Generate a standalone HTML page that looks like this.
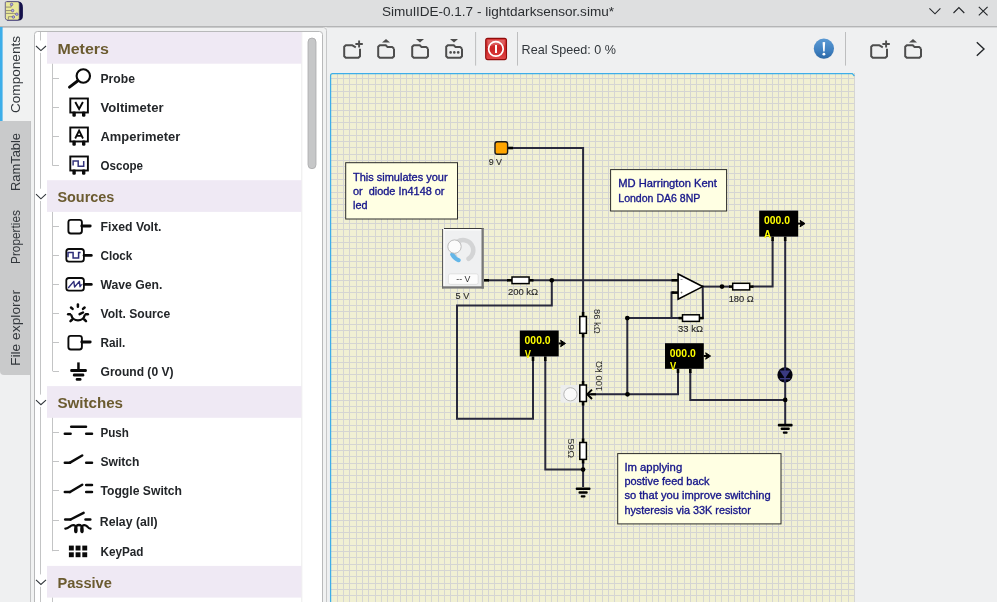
<!DOCTYPE html>
<html><head><meta charset="utf-8"><title>SimulIDE</title>
<style>html,body{margin:0;padding:0;width:997px;height:602px;overflow:hidden;background:#eff0f1}
svg{display:block;font-family:"Liberation Sans", sans-serif;will-change:transform}</style></head>
<body><svg width="997" height="602" viewBox="0 0 997 602">
<rect x="0" y="0" width="997" height="602" fill="#eff0f1"/>
<rect x="0" y="0" width="997" height="26" fill="#dedfe0"/>
<rect x="0" y="26" width="997" height="1.4" fill="#b4b5b6"/>
<text x="382" y="15.5" font-size="13" fill="#2b2e31" textLength="232" lengthAdjust="spacingAndGlyphs" text-anchor="start" >SimulIDE-0.1.7 - lightdarksensor.simu*</text>
<g fill="none" stroke="#232629" stroke-width="1.1"><polyline points="929.4,8.4 935,13.8 940.4,8.4"/><polyline points="953.5,13 958.9,7.6 964.3,13"/><path d="M978.8,6.8 L987.6,15.4 M987.6,6.8 L978.8,15.4"/></g>
<g><path d="M7,1.6 H18.5 Q22.9,2.2 22.9,7.5 V16 Q22.9,20.4 18.5,20.6 H7 Z" fill="#14104a"/><path d="M6.2,1.7 H17.5 Q19.3,1.7 19.3,3.6 V18.3 Q19.3,20.1 17.5,20.1 H7.6 Q5.3,20.1 5.3,17.8 V2.6 Q5.3,1.7 6.2,1.7 Z" fill="#e9e89a" stroke="#3b3278" stroke-width="0.7"/><g stroke="#8a8470" stroke-width="0.9" fill="none"><path d="M5.6,7.1 H11.2 V4.6"/><path d="M5.6,10.6 H12.3"/><path d="M5.6,13.4 H13.5 L16.6,14.2"/><path d="M8.4,19.6 V16.7 H13.2"/></g><g fill="#b7b0e6" stroke="#4a4290" stroke-width="0.6"><circle cx="11.6" cy="4.4" r="1.25"/><circle cx="12.6" cy="10.6" r="1.25"/><circle cx="16.8" cy="14.2" r="1.25"/><circle cx="13.4" cy="17" r="1.25"/></g></g>
<rect x="0" y="27" width="326.5" height="575" fill="#f1f2f2"/>
<path d="M0,27.5 H323.5 Q326.5,27.5 326.5,30.5 V602" fill="none" stroke="#c6c7c8" stroke-width="1"/>
<rect x="0" y="370" width="30" height="232" fill="#eff0f1"/>
<path d="M0,121 H31 V375 H4 Q0,375 0,371 Z" fill="#c9cacb"/>
<rect x="30" y="121" width="1" height="481" fill="#c2c3c4"/>
<rect x="0" y="27" width="2.6" height="94" fill="#3daee9"/>
<text transform="translate(20.2,113) rotate(-90)" x="0" y="0" font-size="13" fill="#31363b" textLength="77" lengthAdjust="spacingAndGlyphs">Components</text>
<text transform="translate(20.2,191) rotate(-90)" x="0" y="0" font-size="13" fill="#31363b" textLength="58" lengthAdjust="spacingAndGlyphs">RamTable</text>
<text transform="translate(20.2,264) rotate(-90)" x="0" y="0" font-size="13" fill="#31363b" textLength="54" lengthAdjust="spacingAndGlyphs">Properties</text>
<text transform="translate(20.2,366) rotate(-90)" x="0" y="0" font-size="13" fill="#31363b" textLength="76" lengthAdjust="spacingAndGlyphs">File explorer</text>
<rect x="34.5" y="31.5" width="288" height="600" rx="3" fill="#ffffff" stroke="#b8b9ba" stroke-width="1"/>
<rect x="301.3" y="32" width="1" height="570" fill="#ebebeb"/>
<rect x="308" y="38" width="8" height="130.7" rx="4" fill="#c6c7c8" stroke="#a9aaab" stroke-width="0.8"/>
<rect x="40" y="32" width="1" height="570" fill="#c3c4c5"/>
<rect x="47" y="32" width="254.5" height="31.7" fill="#efe9f4"/>
<rect x="38" y="40.5" width="6" height="12.3" fill="#ffffff"/>
<polyline points="36,46.0 40.9,50.599999999999994 46,46.0" fill="none" stroke="#31363b" stroke-width="1.1"/>
<text x="57.4" y="54" font-size="14" font-weight="bold" fill="#6b5b30" textLength="51.5" lengthAdjust="spacingAndGlyphs" text-anchor="start" >Meters</text>
<rect x="47" y="180.2" width="254.5" height="31.7" fill="#efe9f4"/>
<rect x="38" y="188.7" width="6" height="12.3" fill="#ffffff"/>
<polyline points="36,194.2 40.9,198.8 46,194.2" fill="none" stroke="#31363b" stroke-width="1.1"/>
<text x="57.4" y="202.2" font-size="14" font-weight="bold" fill="#6b5b30" textLength="57" lengthAdjust="spacingAndGlyphs" text-anchor="start" >Sources</text>
<rect x="47" y="386.1" width="254.5" height="31.7" fill="#efe9f4"/>
<rect x="38" y="394.6" width="6" height="12.3" fill="#ffffff"/>
<polyline points="36,400.1 40.9,404.70000000000005 46,400.1" fill="none" stroke="#31363b" stroke-width="1.1"/>
<text x="57.4" y="408.1" font-size="14" font-weight="bold" fill="#6b5b30" textLength="65.6" lengthAdjust="spacingAndGlyphs" text-anchor="start" >Switches</text>
<rect x="47" y="565.9" width="254.5" height="31.7" fill="#efe9f4"/>
<rect x="38" y="574.4" width="6" height="12.3" fill="#ffffff"/>
<polyline points="36,579.9 40.9,584.4999999999999 46,579.9" fill="none" stroke="#31363b" stroke-width="1.1"/>
<text x="57.4" y="587.9" font-size="14" font-weight="bold" fill="#6b5b30" textLength="54.5" lengthAdjust="spacingAndGlyphs" text-anchor="start" >Passive</text>
<rect x="53" y="78" width="6" height="1" fill="#c3c4c5"/>
<text x="100.5" y="82.8" font-size="13" font-weight="bold" fill="#232629" textLength="34.4" lengthAdjust="spacingAndGlyphs" text-anchor="start" >Probe</text>
<line x1="78.2" y1="80.5" x2="69.5" y2="87.10000000000001" stroke="#0a0a0a" stroke-width="2.9" stroke-linecap="round"/><circle cx="83.3" cy="76.0" r="6.7" fill="#fff" stroke="#0a0a0a" stroke-width="2.1"/>
<rect x="53" y="107" width="6" height="1" fill="#c3c4c5"/>
<text x="100.5" y="111.8" font-size="13" font-weight="bold" fill="#232629" textLength="63" lengthAdjust="spacingAndGlyphs" text-anchor="start" >Voltimeter</text>
<rect x="70.3" y="98.5" width="17.6" height="14" fill="#fff" stroke="#0a0a0a" stroke-width="1.9"/><rect x="72.4" y="111.5" width="3.4" height="5.2" rx="1.3" fill="#0a0a0a"/><rect x="82" y="111.5" width="3.4" height="5.2" rx="1.3" fill="#0a0a0a"/><path d="M75.3,102.0 L79.1,109.0 L82.9,102.0" fill="none" stroke="#0a0a0a" stroke-width="1.9"/>
<rect x="53" y="136" width="6" height="1" fill="#c3c4c5"/>
<text x="100.5" y="140.79999999999998" font-size="13" font-weight="bold" fill="#232629" textLength="79.8" lengthAdjust="spacingAndGlyphs" text-anchor="start" >Amperimeter</text>
<rect x="70.3" y="127.49999999999999" width="17.6" height="14" fill="#fff" stroke="#0a0a0a" stroke-width="1.9"/><rect x="72.4" y="140.5" width="3.4" height="5.2" rx="1.3" fill="#0a0a0a"/><rect x="82" y="140.5" width="3.4" height="5.2" rx="1.3" fill="#0a0a0a"/><path d="M75.2,138.5 L79.1,130.5 L83,138.5 M76.6,135.79999999999998 H81.6" fill="none" stroke="#0a0a0a" stroke-width="1.8"/>
<rect x="53" y="165" width="6" height="1" fill="#c3c4c5"/>
<text x="100.5" y="169.79999999999998" font-size="13" font-weight="bold" fill="#232629" textLength="42.5" lengthAdjust="spacingAndGlyphs" text-anchor="start" >Oscope</text>
<rect x="70.3" y="156.5" width="17.6" height="14" fill="#fff" stroke="#0a0a0a" stroke-width="1.9"/><rect x="72.4" y="169.5" width="3.4" height="5.2" rx="1.3" fill="#0a0a0a"/><rect x="82" y="169.5" width="3.4" height="5.2" rx="1.3" fill="#0a0a0a"/><polyline points="73.1,165.5 73.1,161.0 78.2,161.0 78.2,166.3 83.7,166.3 83.7,161.0" fill="none" stroke="#34347c" stroke-width="1.5"/>
<rect x="53" y="226" width="6" height="1" fill="#c3c4c5"/>
<text x="100.5" y="230.99999999999997" font-size="13" font-weight="bold" fill="#232629" textLength="61" lengthAdjust="spacingAndGlyphs" text-anchor="start" >Fixed Volt.</text>
<rect x="68.4" y="219.89999999999998" width="13.5" height="13.6" rx="2.4" fill="#fff" stroke="#0a0a0a" stroke-width="1.9"/><line x1="81.8" y1="225.99999999999997" x2="90.2" y2="225.99999999999997" stroke="#0a0a0a" stroke-width="2.9" stroke-linecap="round"/>
<rect x="53" y="255" width="6" height="1" fill="#c3c4c5"/>
<text x="100.5" y="260.0" font-size="13" font-weight="bold" fill="#232629" textLength="31.8" lengthAdjust="spacingAndGlyphs" text-anchor="start" >Clock</text>
<rect x="66.3" y="248.99999999999997" width="17.6" height="12.6" rx="2.6" fill="#fff" stroke="#0a0a0a" stroke-width="1.8"/><line x1="84" y1="255.39999999999998" x2="91.4" y2="255.39999999999998" stroke="#0a0a0a" stroke-width="2.6" stroke-linecap="round"/><polyline points="68,257.2 68,252.39999999999998 73.1,252.39999999999998 73.1,258.09999999999997 78.6,258.09999999999997 78.6,252.39999999999998 80.6,252.39999999999998" fill="none" stroke="#2c2c78" stroke-width="1.5"/>
<rect x="53" y="284" width="6" height="1" fill="#c3c4c5"/>
<text x="100.5" y="289.0" font-size="13" font-weight="bold" fill="#232629" textLength="61.8" lengthAdjust="spacingAndGlyphs" text-anchor="start" >Wave Gen.</text>
<rect x="66.3" y="278.0" width="17.6" height="12.6" rx="2.6" fill="#fff" stroke="#0a0a0a" stroke-width="1.8"/><line x1="84" y1="284.4" x2="91.4" y2="284.4" stroke="#0a0a0a" stroke-width="2.6" stroke-linecap="round"/><polyline points="68.2,288.0 73.8,281.4 74.6,287.0 79.4,281.4 80,286.7 81.6,284.4" fill="none" stroke="#2c2c78" stroke-width="1.4" stroke-linejoin="round"/>
<rect x="53" y="313" width="6" height="1" fill="#c3c4c5"/>
<text x="100.5" y="318.0" font-size="13" font-weight="bold" fill="#232629" textLength="69.8" lengthAdjust="spacingAndGlyphs" text-anchor="start" >Volt. Source</text>
<line x1="77.9" y1="304.5" x2="77.9" y2="306.7" stroke="#0a0a0a" stroke-width="2.5" stroke-linecap="round"/><line x1="71" y1="307.5" x2="72.6" y2="308.9" stroke="#0a0a0a" stroke-width="2.5" stroke-linecap="round"/><line x1="84.6" y1="307.5" x2="83" y2="308.9" stroke="#0a0a0a" stroke-width="2.5" stroke-linecap="round"/><line x1="68.2" y1="314.29999999999995" x2="70" y2="314.29999999999995" stroke="#0a0a0a" stroke-width="2.5" stroke-linecap="round"/><line x1="85.8" y1="314.29999999999995" x2="87.8" y2="314.29999999999995" stroke="#0a0a0a" stroke-width="2.5" stroke-linecap="round"/><line x1="70.5" y1="321.2" x2="72.2" y2="319.5" stroke="#0a0a0a" stroke-width="2.5" stroke-linecap="round"/><line x1="86" y1="321.2" x2="84.3" y2="319.5" stroke="#0a0a0a" stroke-width="2.5" stroke-linecap="round"/><line x1="79.6" y1="314.2" x2="83" y2="312.5" stroke="#0a0a0a" stroke-width="2.5" stroke-linecap="round"/><path d="M71.4,315.5 A6.7,5.8 0 0 0 84.6,315.5" fill="none" stroke="#0a0a0a" stroke-width="2.3" stroke-linecap="round"/>
<rect x="53" y="342" width="6" height="1" fill="#c3c4c5"/>
<text x="100.5" y="347.0" font-size="13" font-weight="bold" fill="#232629" textLength="24.9" lengthAdjust="spacingAndGlyphs" text-anchor="start" >Rail.</text>
<rect x="68.4" y="335.9" width="13.5" height="13.6" rx="2.4" fill="#fff" stroke="#0a0a0a" stroke-width="1.9"/><line x1="81.8" y1="342.0" x2="90.2" y2="342.0" stroke="#0a0a0a" stroke-width="2.9" stroke-linecap="round"/>
<rect x="53" y="371" width="6" height="1" fill="#c3c4c5"/>
<text x="100.5" y="376.0" font-size="13" font-weight="bold" fill="#232629" textLength="73" lengthAdjust="spacingAndGlyphs" text-anchor="start" >Ground (0 V)</text>
<rect x="77.2" y="362.4" width="2.5" height="8" fill="#0a0a0a"/><rect x="70.2" y="369.09999999999997" width="16.7" height="2.9" rx="1.3" fill="#0a0a0a"/><rect x="72.9" y="373.59999999999997" width="11.4" height="2.9" rx="1.3" fill="#0a0a0a"/><rect x="75.7" y="378.0" width="5.8" height="2.8" rx="1.3" fill="#0a0a0a"/>
<rect x="53" y="432" width="6" height="1" fill="#c3c4c5"/>
<text x="100.5" y="436.90000000000003" font-size="13" font-weight="bold" fill="#232629" textLength="28.4" lengthAdjust="spacingAndGlyphs" text-anchor="start" >Push</text>
<line x1="71.2" y1="426.7" x2="86" y2="426.7" stroke="#0a0a0a" stroke-width="2.5" stroke-linecap="round"/><line x1="64.8" y1="433.8" x2="70.6" y2="433.8" stroke="#0a0a0a" stroke-width="2.5" stroke-linecap="round"/><line x1="86.2" y1="433.8" x2="92" y2="433.8" stroke="#0a0a0a" stroke-width="2.5" stroke-linecap="round"/>
<rect x="53" y="461" width="6" height="1" fill="#c3c4c5"/>
<text x="100.5" y="465.90000000000003" font-size="13" font-weight="bold" fill="#232629" textLength="39" lengthAdjust="spacingAndGlyphs" text-anchor="start" >Switch</text>
<line x1="64.8" y1="462.7" x2="70" y2="462.7" stroke="#0a0a0a" stroke-width="2.5" stroke-linecap="round"/><line x1="70" y1="462.7" x2="82.2" y2="455.5" stroke="#0a0a0a" stroke-width="2.5" stroke-linecap="round"/><line x1="86.2" y1="462.7" x2="92" y2="462.7" stroke="#0a0a0a" stroke-width="2.5" stroke-linecap="round"/>
<rect x="53" y="490" width="6" height="1" fill="#c3c4c5"/>
<text x="100.5" y="494.90000000000003" font-size="13" font-weight="bold" fill="#232629" textLength="81.5" lengthAdjust="spacingAndGlyphs" text-anchor="start" >Toggle Switch</text>
<line x1="64.8" y1="492.0" x2="70" y2="492.0" stroke="#0a0a0a" stroke-width="2.5" stroke-linecap="round"/><line x1="70" y1="492.0" x2="82.2" y2="484.7" stroke="#0a0a0a" stroke-width="2.5" stroke-linecap="round"/><line x1="86.2" y1="492.0" x2="92" y2="492.0" stroke="#0a0a0a" stroke-width="2.5" stroke-linecap="round"/><line x1="86.2" y1="484.90000000000003" x2="92" y2="484.90000000000003" stroke="#0a0a0a" stroke-width="2.5" stroke-linecap="round"/>
<rect x="53" y="520" width="6" height="1" fill="#c3c4c5"/>
<text x="99.8" y="525.6" font-size="13" font-weight="bold" fill="#232629" textLength="57.9" lengthAdjust="spacingAndGlyphs" text-anchor="start" >Relay (all)</text>
<line x1="65.2" y1="519.5" x2="70.5" y2="519.5" stroke="#0a0a0a" stroke-width="2.5" stroke-linecap="round"/><line x1="70.5" y1="519.5" x2="83.6" y2="512.8" stroke="#0a0a0a" stroke-width="2.5" stroke-linecap="round"/><line x1="85.5" y1="519.5" x2="90.3" y2="519.5" stroke="#0a0a0a" stroke-width="2.5" stroke-linecap="round"/><path d="M65.3,528.6 Q67.5,528.8 69.5,526.8 Q73,523.8 75.5,526.0 Q74.6,532.5 75.9,532.0 Q77,532.5 76.2,526.0 Q79,524.0 81.6,526.0 Q80.8,532.5 82,532.0 Q83.2,532.5 82.2,526.0 Q84.5,523.8 87.4,526.6 Q89,528.8 90.6,528.6" fill="none" stroke="#0a0a0a" stroke-width="2.2" stroke-linecap="round" stroke-linejoin="round"/>
<rect x="53" y="550" width="6" height="1" fill="#c3c4c5"/>
<text x="100.5" y="556.1" font-size="13" font-weight="bold" fill="#232629" textLength="43" lengthAdjust="spacingAndGlyphs" text-anchor="start" >KeyPad</text>
<rect x="68.9" y="545.5999999999999" width="4.9" height="4.9" fill="#0a0a0a"/><rect x="68.9" y="552.3" width="4.9" height="4.9" fill="#0a0a0a"/><rect x="75.60000000000001" y="545.5999999999999" width="4.9" height="4.9" fill="#0a0a0a"/><rect x="75.60000000000001" y="552.3" width="4.9" height="4.9" fill="#0a0a0a"/><rect x="82.30000000000001" y="545.5999999999999" width="4.9" height="4.9" fill="#0a0a0a"/><rect x="82.30000000000001" y="552.3" width="4.9" height="4.9" fill="#0a0a0a"/>
<rect x="52" y="63.7" width="1" height="102.10000000000001" fill="#c3c4c5"/>
<rect x="52" y="211.9" width="1" height="159.4" fill="#c3c4c5"/>
<rect x="52" y="417.8" width="1" height="133.40000000000003" fill="#c3c4c5"/>
<rect x="52" y="597.6" width="1" height="4.399999999999977" fill="#c3c4c5"/>
<g fill="none" stroke="#4d4d4d" stroke-width="2" stroke-linejoin="round"><path d="M360.0,48.800000000000004 V56.2 L358.4,57.800000000000004 H345.8 L344.2,56.2 V46.800000000000004 L345.8,45.2 H352.0 L355.8,47.400000000000006"/></g><path d="M359.1,40.400000000000006 V47.6 M355.4,44.0 H362.8" stroke="#4d4d4d" stroke-width="1.9" fill="none"/>
<g fill="none" stroke="#4d4d4d" stroke-width="2" stroke-linejoin="round"><path d="M394.0,48.7 V56.2 L392.4,57.800000000000004 H379.8 L378.2,56.2 V46.800000000000004 L379.8,45.2 H385.8 L387.59999999999997,47.1 H392.4 L394.0,48.7"/></g><path d="M382.0,42.6 L386.0,39.0 L390.0,42.6 Z" fill="#4d4d4d"/>
<g fill="none" stroke="#4d4d4d" stroke-width="2" stroke-linejoin="round"><path d="M428.0,48.7 V56.2 L426.4,57.800000000000004 H413.8 L412.2,56.2 V46.800000000000004 L413.8,45.2 H419.8 L421.59999999999997,47.1 H426.4 L428.0,48.7"/></g><path d="M416.0,39.0 L420.0,42.6 L424.0,39.0 Z" fill="#4d4d4d"/>
<g fill="none" stroke="#4d4d4d" stroke-width="2" stroke-linejoin="round"><path d="M462.0,48.7 V56.2 L460.4,57.800000000000004 H447.8 L446.2,56.2 V46.800000000000004 L447.8,45.2 H453.8 L455.59999999999997,47.1 H460.4 L462.0,48.7"/></g><path d="M450.0,39.0 L454.0,42.6 L458.0,39.0 Z" fill="#4d4d4d"/><circle cx="450.59999999999997" cy="52.400000000000006" r="1.3" fill="#4d4d4d"/><circle cx="454.3" cy="52.400000000000006" r="1.3" fill="#4d4d4d"/><circle cx="458.2" cy="52.400000000000006" r="1.3" fill="#4d4d4d"/>
<rect x="475.1" y="32" width="1" height="33.6" fill="#bdbebf"/>
<rect x="517" y="32" width="1" height="33.6" fill="#bdbebf"/>
<defs><linearGradient id="pg" x1="0" y1="0" x2="0" y2="1"><stop offset="0" stop-color="#d83a3a"/><stop offset="0.5" stop-color="#cc2424"/><stop offset="1" stop-color="#e24848"/></linearGradient><linearGradient id="ig" x1="0" y1="0" x2="0" y2="1"><stop offset="0" stop-color="#5b9ad4"/><stop offset="0.6" stop-color="#3f80c0"/><stop offset="1" stop-color="#2b68a6"/></linearGradient></defs>
<rect x="485.7" y="38.4" width="20.8" height="21.2" rx="2" fill="url(#pg)" stroke="#900c0c" stroke-width="1.1"/>
<path d="M487.5,40 H504.7 V45.5 Q496,43.5 487.5,47 Z" fill="#ffffff" opacity="0.22"/>
<circle cx="495.9" cy="48.9" r="7.3" fill="none" stroke="#ffffff" stroke-width="1.7"/>
<rect x="495" y="45" width="2" height="8" fill="#ffffff"/>
<text x="521.6" y="53.8" font-size="13" fill="#31363b" textLength="94.4" lengthAdjust="spacingAndGlyphs" text-anchor="start" >Real Speed: 0 %</text>
<circle cx="823.9" cy="49.2" r="10.1" fill="#000" opacity="0.06"/>
<circle cx="823.9" cy="48.6" r="10.1" fill="url(#ig)"/>
<path d="M822.6,42.2 Q823.9,41.6 825.2,42.2 L824.6,51.4 H823.2 Z" fill="#fff"/><circle cx="823.9" cy="54.2" r="1.4" fill="#fff"/>
<rect x="845" y="32" width="1" height="33.6" fill="#bdbebf"/>
<g fill="none" stroke="#4d4d4d" stroke-width="2" stroke-linejoin="round"><path d="M887.0,48.800000000000004 V56.2 L885.4,57.800000000000004 H872.8000000000001 L871.2,56.2 V46.800000000000004 L872.8000000000001,45.2 H879.0 L882.8000000000001,47.400000000000006"/></g><path d="M886.1,40.400000000000006 V47.6 M882.4,44.0 H889.8" stroke="#4d4d4d" stroke-width="1.9" fill="none"/>
<g fill="none" stroke="#4d4d4d" stroke-width="2" stroke-linejoin="round"><path d="M921.0,48.7 V56.2 L919.4,57.800000000000004 H906.8000000000001 L905.2,56.2 V46.800000000000004 L906.8000000000001,45.2 H912.8000000000001 L914.6,47.1 H919.4 L921.0,48.7"/></g><path d="M909.0,42.6 L913.0,39.0 L917.0,42.6 Z" fill="#4d4d4d"/>
<polyline points="976.8,42.2 984,49 976.8,55.8" fill="none" stroke="#232629" stroke-width="1.4"/>
<rect x="330" y="73" width="525" height="529" fill="#f1f0d3"/>
<path d="M337,73h1V602h-1ZM343,73h1V602h-1ZM349,73h1V602h-1ZM356,73h1V602h-1ZM362,73h1V602h-1ZM368,73h1V602h-1ZM375,73h1V602h-1ZM381,73h1V602h-1ZM387,73h1V602h-1ZM393,73h1V602h-1ZM400,73h1V602h-1ZM406,73h1V602h-1ZM412,73h1V602h-1ZM419,73h1V602h-1ZM425,73h1V602h-1ZM431,73h1V602h-1ZM438,73h1V602h-1ZM444,73h1V602h-1ZM450,73h1V602h-1ZM457,73h1V602h-1ZM463,73h1V602h-1ZM469,73h1V602h-1ZM475,73h1V602h-1ZM482,73h1V602h-1ZM488,73h1V602h-1ZM494,73h1V602h-1ZM501,73h1V602h-1ZM507,73h1V602h-1ZM513,73h1V602h-1ZM520,73h1V602h-1ZM526,73h1V602h-1ZM532,73h1V602h-1ZM539,73h1V602h-1ZM545,73h1V602h-1ZM551,73h1V602h-1ZM557,73h1V602h-1ZM564,73h1V602h-1ZM570,73h1V602h-1ZM576,73h1V602h-1ZM583,73h1V602h-1ZM589,73h1V602h-1ZM595,73h1V602h-1ZM602,73h1V602h-1ZM608,73h1V602h-1ZM614,73h1V602h-1ZM621,73h1V602h-1ZM627,73h1V602h-1ZM633,73h1V602h-1ZM639,73h1V602h-1ZM646,73h1V602h-1ZM652,73h1V602h-1ZM658,73h1V602h-1ZM665,73h1V602h-1ZM671,73h1V602h-1ZM677,73h1V602h-1ZM684,73h1V602h-1ZM690,73h1V602h-1ZM696,73h1V602h-1ZM703,73h1V602h-1ZM709,73h1V602h-1ZM715,73h1V602h-1ZM721,73h1V602h-1ZM728,73h1V602h-1ZM734,73h1V602h-1ZM740,73h1V602h-1ZM747,73h1V602h-1ZM753,73h1V602h-1ZM759,73h1V602h-1ZM766,73h1V602h-1ZM772,73h1V602h-1ZM778,73h1V602h-1ZM784,73h1V602h-1ZM791,73h1V602h-1ZM797,73h1V602h-1ZM803,73h1V602h-1ZM810,73h1V602h-1ZM816,73h1V602h-1ZM822,73h1V602h-1ZM829,73h1V602h-1ZM835,73h1V602h-1ZM841,73h1V602h-1ZM848,73h1V602h-1ZM854,73h1V602h-1ZM330,78H855v1H330ZM330,84H855v1H330ZM330,91H855v1H330ZM330,97H855v1H330ZM330,103H855v1H330ZM330,110H855v1H330ZM330,116H855v1H330ZM330,122H855v1H330ZM330,129H855v1H330ZM330,135H855v1H330ZM330,141H855v1H330ZM330,147H855v1H330ZM330,154H855v1H330ZM330,160H855v1H330ZM330,166H855v1H330ZM330,173H855v1H330ZM330,179H855v1H330ZM330,185H855v1H330ZM330,192H855v1H330ZM330,198H855v1H330ZM330,204H855v1H330ZM330,210H855v1H330ZM330,217H855v1H330ZM330,223H855v1H330ZM330,229H855v1H330ZM330,236H855v1H330ZM330,242H855v1H330ZM330,248H855v1H330ZM330,255H855v1H330ZM330,261H855v1H330ZM330,267H855v1H330ZM330,274H855v1H330ZM330,280H855v1H330ZM330,286H855v1H330ZM330,292H855v1H330ZM330,299H855v1H330ZM330,305H855v1H330ZM330,311H855v1H330ZM330,318H855v1H330ZM330,324H855v1H330ZM330,330H855v1H330ZM330,337H855v1H330ZM330,343H855v1H330ZM330,349H855v1H330ZM330,356H855v1H330ZM330,362H855v1H330ZM330,368H855v1H330ZM330,374H855v1H330ZM330,381H855v1H330ZM330,387H855v1H330ZM330,393H855v1H330ZM330,400H855v1H330ZM330,406H855v1H330ZM330,412H855v1H330ZM330,419H855v1H330ZM330,425H855v1H330ZM330,431H855v1H330ZM330,438H855v1H330ZM330,444H855v1H330ZM330,450H855v1H330ZM330,456H855v1H330ZM330,463H855v1H330ZM330,469H855v1H330ZM330,475H855v1H330ZM330,482H855v1H330ZM330,488H855v1H330ZM330,494H855v1H330ZM330,501H855v1H330ZM330,507H855v1H330ZM330,513H855v1H330ZM330,520H855v1H330ZM330,526H855v1H330ZM330,532H855v1H330ZM330,538H855v1H330ZM330,545H855v1H330ZM330,551H855v1H330ZM330,557H855v1H330ZM330,564H855v1H330ZM330,570H855v1H330ZM330,576H855v1H330ZM330,583H855v1H330ZM330,589H855v1H330ZM330,595H855v1H330Z" fill="#d5d5d3" shape-rendering="crispEdges"/>
<path d="M330.6,602 V75.6 Q330.6,73.6 332.6,73.6 H852.3 L854.4,76" fill="none" stroke="#3daee9" stroke-width="1.25"/>
<polyline points="513,148 583.1,148 583.1,312" fill="none" stroke="#28283c" stroke-width="2.0" stroke-linejoin="miter" stroke-linecap="square"/>
<polyline points="489,280.3 507,280.3" fill="none" stroke="#28283c" stroke-width="2.0" stroke-linejoin="miter" stroke-linecap="square"/>
<polyline points="533,280.3 671.5,280.3" fill="none" stroke="#28283c" stroke-width="2.0" stroke-linejoin="miter" stroke-linecap="square"/>
<polyline points="551.8,280.3 551.8,305.4 457,305.4 457,418.8 533,418.8 533,361" fill="none" stroke="#28283c" stroke-width="2.0" stroke-linejoin="miter" stroke-linecap="square"/>
<polyline points="545.3,361 545.3,469.6 583.1,469.6" fill="none" stroke="#28283c" stroke-width="2.0" stroke-linejoin="miter" stroke-linecap="square"/>
<polyline points="583.1,337.5 583.1,381" fill="none" stroke="#28283c" stroke-width="2.0" stroke-linejoin="miter" stroke-linecap="square"/>
<polyline points="583.1,405.5 583.1,438.5" fill="none" stroke="#28283c" stroke-width="2.0" stroke-linejoin="miter" stroke-linecap="square"/>
<polyline points="583.1,463.5 583.1,486" fill="none" stroke="#28283c" stroke-width="2.0" stroke-linejoin="miter" stroke-linecap="square"/>
<polyline points="592,394.3 678,394.3 678,373" fill="none" stroke="#28283c" stroke-width="2.0" stroke-linejoin="miter" stroke-linecap="square"/>
<polyline points="627.3,318.1 627.3,394.3" fill="none" stroke="#28283c" stroke-width="2.0" stroke-linejoin="miter" stroke-linecap="square"/>
<polyline points="627.3,318.1 678.5,318.1" fill="none" stroke="#28283c" stroke-width="2.0" stroke-linejoin="miter" stroke-linecap="square"/>
<polyline points="671.5,318.1 671.5,292.6 673,292.6" fill="none" stroke="#28283c" stroke-width="2.0" stroke-linejoin="miter" stroke-linecap="square"/>
<polyline points="703,318.1 702.7,286.6" fill="none" stroke="#28283c" stroke-width="2.0" stroke-linejoin="miter" stroke-linecap="square"/>
<polyline points="702.7,286.6 729,286.6" fill="none" stroke="#28283c" stroke-width="2.0" stroke-linejoin="miter" stroke-linecap="square"/>
<polyline points="753.5,286.6 772.6,286.6 772.6,241" fill="none" stroke="#28283c" stroke-width="2.0" stroke-linejoin="miter" stroke-linecap="square"/>
<polyline points="785.2,241 785.2,367" fill="none" stroke="#28283c" stroke-width="2.0" stroke-linejoin="miter" stroke-linecap="square"/>
<polyline points="785.2,382 785.2,423" fill="none" stroke="#28283c" stroke-width="2.0" stroke-linejoin="miter" stroke-linecap="square"/>
<polyline points="690.3,373 690.3,399.9 785.2,399.9" fill="none" stroke="#28283c" stroke-width="2.0" stroke-linejoin="miter" stroke-linecap="square"/>
<line x1="508" y1="148" x2="513" y2="148" stroke="#000" stroke-width="2.6"/>
<line x1="484" y1="280.3" x2="489" y2="280.3" stroke="#000" stroke-width="2.6"/>
<line x1="507" y1="280.3" x2="512" y2="280.3" stroke="#000" stroke-width="2.6"/>
<line x1="529" y1="280.3" x2="533.5" y2="280.3" stroke="#000" stroke-width="2.6"/>
<line x1="671.5" y1="280.3" x2="678" y2="280.3" stroke="#000" stroke-width="2.6"/>
<line x1="671.5" y1="292.6" x2="678" y2="292.6" stroke="#000" stroke-width="2.6"/>
<line x1="678.5" y1="318.1" x2="682.5" y2="318.1" stroke="#000" stroke-width="2.6"/>
<line x1="699.4" y1="318.1" x2="703.5" y2="318.1" stroke="#000" stroke-width="2.6"/>
<line x1="729" y1="286.6" x2="733" y2="286.6" stroke="#000" stroke-width="2.6"/>
<line x1="749.7" y1="286.6" x2="753.5" y2="286.6" stroke="#000" stroke-width="2.6"/>
<line x1="583.1" y1="312" x2="583.1" y2="316.5" stroke="#000" stroke-width="2.6"/>
<line x1="583.1" y1="333.3" x2="583.1" y2="337.5" stroke="#000" stroke-width="2.6"/>
<line x1="583.1" y1="381" x2="583.1" y2="385" stroke="#000" stroke-width="2.6"/>
<line x1="583.1" y1="401.5" x2="583.1" y2="405.5" stroke="#000" stroke-width="2.6"/>
<line x1="583.1" y1="438.5" x2="583.1" y2="442.5" stroke="#000" stroke-width="2.6"/>
<line x1="583.1" y1="459.4" x2="583.1" y2="463.5" stroke="#000" stroke-width="2.6"/>
<line x1="533" y1="356.4" x2="533" y2="361" stroke="#000" stroke-width="2.6"/>
<line x1="545.3" y1="356.4" x2="545.3" y2="361" stroke="#000" stroke-width="2.6"/>
<line x1="678" y1="368.8" x2="678" y2="373" stroke="#000" stroke-width="2.6"/>
<line x1="690.3" y1="368.8" x2="690.3" y2="373" stroke="#000" stroke-width="2.6"/>
<line x1="772.6" y1="236.6" x2="772.6" y2="241" stroke="#000" stroke-width="2.6"/>
<line x1="785.2" y1="236.6" x2="785.2" y2="241" stroke="#000" stroke-width="2.6"/>
<circle cx="551.8" cy="280.3" r="2.35" fill="#000"/>
<circle cx="627.3" cy="318.1" r="2.35" fill="#000"/>
<circle cx="627.5" cy="394.3" r="2.35" fill="#000"/>
<circle cx="722" cy="286.6" r="2.35" fill="#000"/>
<circle cx="583.1" cy="469.6" r="2.3" fill="#000"/>
<circle cx="785.2" cy="399.9" r="2.3" fill="#000"/>
<rect x="495" y="141.8" width="12.6" height="12.4" rx="2.2" fill="#ffa500" stroke="#1a1a1a" stroke-width="1.4"/>
<text x="488.7" y="164.5" font-size="9.5" fill="#2a2a2a" textLength="13.3" lengthAdjust="spacingAndGlyphs" text-anchor="start" stroke="#2a2a2a" stroke-width="0.15">9 V</text>
<rect x="442.5" y="228.3" width="41" height="60" fill="#eff0f1"/>
<rect x="442.2" y="229" width="1.1" height="59.5" fill="#3a3a3a"/>
<rect x="444" y="228" width="39.6" height="1.1" fill="#3a3a3a"/>
<rect x="443.3" y="229" width="1.3" height="57.5" fill="#ffffff"/>
<rect x="444" y="229.1" width="37.5" height="1.3" fill="#ffffff"/>
<rect x="481.5" y="228.3" width="2.3" height="60.3" fill="#777777"/>
<rect x="442.4" y="286.3" width="41.4" height="2.3" fill="#777777"/>
<path d="M455,256.5 A10.2,10.2 0 1 1 468.6,258.8" fill="none" stroke="#d3d4d5" stroke-width="4.6" stroke-linecap="round"/>
<path d="M452.3,254.6 Q454.6,258.8 458.6,260.2" fill="none" stroke="#63b6e8" stroke-width="4.2" stroke-linecap="round"/>
<circle cx="454.5" cy="246.6" r="6.7" fill="#fbfbfb" stroke="#b4b4b4" stroke-width="0.9"/>
<rect x="448.4" y="273.8" width="29.8" height="10.6" rx="2" fill="#fcfcfc" stroke="#dadada" stroke-width="0.8"/>
<text x="463.3" y="282.3" font-size="8.8" fill="#333" text-anchor="middle" >-- V</text>
<text x="455.6" y="298.8" font-size="9.5" fill="#2a2a2a" textLength="13.7" lengthAdjust="spacingAndGlyphs" text-anchor="start" stroke="#2a2a2a" stroke-width="0.15">5 V</text>
<rect x="512" y="277.0" width="17.100000000000023" height="6.6" fill="#fff" stroke="#000" stroke-width="1.5"/>
<text x="507.9" y="294.5" font-size="9.5" fill="#2a2a2a" textLength="30.2" lengthAdjust="spacingAndGlyphs" text-anchor="start" stroke="#2a2a2a" stroke-width="0.15">200 kΩ</text>
<rect x="682.5" y="314.8" width="16.899999999999977" height="6.6" fill="#fff" stroke="#000" stroke-width="1.5"/>
<text x="678.1" y="332.4" font-size="9.5" fill="#2a2a2a" textLength="24.9" lengthAdjust="spacingAndGlyphs" text-anchor="start" stroke="#2a2a2a" stroke-width="0.15">33 kΩ</text>
<rect x="732.7" y="283.3" width="17.0" height="6.6" fill="#fff" stroke="#000" stroke-width="1.5"/>
<text x="728.7" y="301.8" font-size="9.5" fill="#2a2a2a" textLength="25.1" lengthAdjust="spacingAndGlyphs" text-anchor="start" stroke="#2a2a2a" stroke-width="0.15">180 Ω</text>
<rect x="579.8000000000001" y="316.5" width="6.6" height="16.80000000000001" fill="#fff" stroke="#000" stroke-width="1.5"/>
<rect x="579.8000000000001" y="442.5" width="6.6" height="16.899999999999977" fill="#fff" stroke="#000" stroke-width="1.5"/>
<text transform="translate(594.2,309) rotate(90)" font-size="9.5" fill="#2a2a2a" textLength="24.8" lengthAdjust="spacingAndGlyphs">86 kΩ</text>
<text transform="translate(568.2,438.5) rotate(90)" font-size="9.5" fill="#2a2a2a" textLength="19.5" lengthAdjust="spacingAndGlyphs">59Ω</text>
<text transform="translate(601.6,391.3) rotate(-90)" font-size="9.5" fill="#2a2a2a" textLength="30.5" lengthAdjust="spacingAndGlyphs">100 kΩ</text>
<rect x="560.5" y="385" width="18.5" height="17.7" fill="#eceded"/>
<circle cx="570.4" cy="394.3" r="6.6" fill="#fafafa" stroke="#b0b0b0" stroke-width="0.9"/>
<rect x="579.8000000000001" y="385" width="6.6" height="16.5" fill="#fff" stroke="#000" stroke-width="1.5"/>
<polyline points="592,389.6 587.3,394.3 592,399" fill="none" stroke="#000" stroke-width="2"/>
<line x1="587.5" y1="394.3" x2="596" y2="394.3" stroke="#000" stroke-width="2"/>
<path d="M678.1,274 L702.7,286.6 L678.1,299.2 Z" fill="#fff" stroke="#000" stroke-width="1.6" stroke-linejoin="miter"/>
<rect x="680.5" y="279" width="2" height="0.6" fill="#666"/><rect x="680.5" y="292.3" width="2" height="0.6" fill="#666"/><rect x="681.2" y="291.6" width="0.6" height="2" fill="#666"/>
<rect x="759.2" y="210.6" width="39.0" height="26.0" fill="#000"/>
<text x="764.0" y="224.1" font-size="10.5" font-weight="bold" fill="#ffff00" textLength="26" lengthAdjust="spacingAndGlyphs" text-anchor="start" >000.0</text>
<text x="764.1" y="237.79999999999998" font-size="10.5" font-weight="bold" fill="#ffff00" textLength="7" lengthAdjust="spacingAndGlyphs" text-anchor="start" >A</text>
<rect x="798.0" y="222.6" width="3.5" height="2" fill="#000"/>
<path d="M800.1,220.4 L805.0,223.6 L800.1,226.79999999999998 L801.1,223.6 Z" fill="#000" stroke="#000" stroke-width="1" stroke-linejoin="round"/>
<rect x="519.8" y="330.5" width="38.90000000000009" height="25.899999999999977" fill="#000"/>
<text x="524.5999999999999" y="344.0" font-size="10.5" font-weight="bold" fill="#ffff00" textLength="26" lengthAdjust="spacingAndGlyphs" text-anchor="start" >000.0</text>
<text x="524.6999999999999" y="357.59999999999997" font-size="10.5" font-weight="bold" fill="#ffff00" textLength="6.2" lengthAdjust="spacingAndGlyphs" text-anchor="start" >V</text>
<rect x="558.5" y="342.45" width="3.5" height="2" fill="#000"/>
<path d="M560.6,340.25 L565.5,343.45 L560.6,346.65 L561.6,343.45 Z" fill="#000" stroke="#000" stroke-width="1" stroke-linejoin="round"/>
<rect x="665" y="343.2" width="38.799999999999955" height="25.600000000000023" fill="#000"/>
<text x="669.8" y="356.7" font-size="10.5" font-weight="bold" fill="#ffff00" textLength="26" lengthAdjust="spacingAndGlyphs" text-anchor="start" >000.0</text>
<text x="669.9" y="370.0" font-size="10.5" font-weight="bold" fill="#ffff00" textLength="6.2" lengthAdjust="spacingAndGlyphs" text-anchor="start" >V</text>
<rect x="703.5999999999999" y="355.0" width="3.5" height="2" fill="#000"/>
<path d="M705.6999999999999,352.8 L710.5999999999999,356.0 L705.6999999999999,359.2 L706.6999999999999,356.0 Z" fill="#000" stroke="#000" stroke-width="1" stroke-linejoin="round"/>
<circle cx="785" cy="374.9" r="7.6" fill="#05050f"/>
<path d="M779.6,370.6 H790.4 L785,378.6 Z" fill="#3a3a82"/>
<rect x="779.8" y="378" width="10.4" height="1.4" fill="#3a3a82"/>
<rect x="784.4" y="367.5" width="1.2" height="15" fill="#3a3a82"/>
<rect x="777.8000000000001" y="423.8" width="14.8" height="2.6" rx="1" fill="#000"/>
<rect x="780.6" y="427.5" width="9.2" height="2.5" rx="1" fill="#000"/>
<rect x="782.8000000000001" y="431.6" width="4.8" height="2.2" rx="1" fill="#000"/>
<rect x="575.7" y="487.5" width="14.8" height="2.6" rx="1" fill="#000"/>
<rect x="578.5" y="491.2" width="9.2" height="2.5" rx="1" fill="#000"/>
<rect x="580.7" y="495.3" width="4.8" height="2.2" rx="1" fill="#000"/>
<rect x="345.7" y="162.7" width="111.80000000000001" height="56.30000000000001" fill="#ffffe3" stroke="#2a2a2a" stroke-width="1"/>
<text x="353" y="181.0" font-size="10.1" fill="#16168a" textLength="94.6" lengthAdjust="spacingAndGlyphs" text-anchor="start" xml:space="preserve" stroke="#16168a" stroke-width="0.32">This simulates your</text>
<text x="353" y="194.8" font-size="10.1" fill="#16168a" textLength="91.5" lengthAdjust="spacingAndGlyphs" text-anchor="start" xml:space="preserve" stroke="#16168a" stroke-width="0.32">or  diode In4148 or</text>
<text x="353" y="208.6" font-size="10.1" fill="#16168a" textLength="14.5" lengthAdjust="spacingAndGlyphs" text-anchor="start" xml:space="preserve" stroke="#16168a" stroke-width="0.32">led</text>
<rect x="610.6" y="169.6" width="116.0" height="41.400000000000006" fill="#ffffe3" stroke="#2a2a2a" stroke-width="1"/>
<text x="618.3" y="186.7" font-size="10.1" fill="#16168a" textLength="98.6" lengthAdjust="spacingAndGlyphs" text-anchor="start" xml:space="preserve" stroke="#16168a" stroke-width="0.32">MD Harrington Kent</text>
<text x="618.3" y="201.89999999999998" font-size="10.1" fill="#16168a" textLength="82" lengthAdjust="spacingAndGlyphs" text-anchor="start" xml:space="preserve" stroke="#16168a" stroke-width="0.32">London DA6 8NP</text>
<rect x="617.7" y="453.6" width="163.29999999999995" height="70.29999999999995" fill="#ffffe3" stroke="#2a2a2a" stroke-width="1"/>
<text x="624.4" y="471.2" font-size="10.1" fill="#16168a" textLength="57.8" lengthAdjust="spacingAndGlyphs" text-anchor="start" xml:space="preserve" stroke="#16168a" stroke-width="0.32">Im applying</text>
<text x="624.4" y="485.33" font-size="10.1" fill="#16168a" textLength="85" lengthAdjust="spacingAndGlyphs" text-anchor="start" xml:space="preserve" stroke="#16168a" stroke-width="0.32">postive feed back</text>
<text x="624.4" y="499.46" font-size="10.1" fill="#16168a" textLength="146.2" lengthAdjust="spacingAndGlyphs" text-anchor="start" xml:space="preserve" stroke="#16168a" stroke-width="0.32">so that you improve switching</text>
<text x="624.4" y="513.59" font-size="10.1" fill="#16168a" textLength="126.4" lengthAdjust="spacingAndGlyphs" text-anchor="start" xml:space="preserve" stroke="#16168a" stroke-width="0.32">hysteresis via 33K resistor</text>
</svg></body></html>
